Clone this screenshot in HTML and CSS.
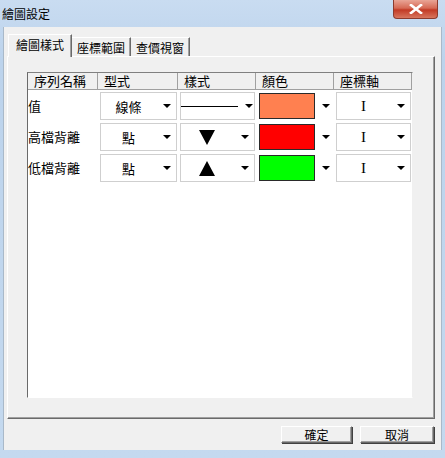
FILE: index.html
```html
<!DOCTYPE html>
<html lang="zh-Hant">
<head>
    <meta charset="UTF-8">
    <title>繪圖設定</title>
    <link rel="stylesheet" href="styles.css">
</head>
<body>
    <div class="window">
        <div class="titlebar">
            <span class="title">繪圖設定</span>
            <div class="close">
                <svg width="14" height="10" viewBox="0 0 14 10">
                    <path d="M2 1 L12 9 M12 1 L2 9" stroke="#fff" stroke-width="2.6" stroke-linecap="square"/>
                </svg>
            </div>
        </div>
        <div class="client">
            <div class="tabs">
                <div class="tab active">繪圖樣式</div>
                <div class="tab">座標範圍</div>
                <div class="tab">查價視窗</div>
            </div>
            <div class="panel">
                <div class="grid">
                    <div class="head">
                        <div class="hcell">序列名稱</div>
                        <div class="hcell">型式</div>
                        <div class="hcell">樣式</div>
                        <div class="hcell">顏色</div>
                        <div class="hcell">座標軸</div>
                    </div>

                    <div class="row">
                        <div class="name">值</div>
                        <div class="col"><div class="combo"><span class="val">線條</span><span class="arrow"></span></div></div>
                        <div class="col"><div class="combo style"><span class="val"><span class="line"></span></span><span class="arrow"></span></div></div>
                        <div class="col"><div class="color"><span class="swatch coral"></span><span class="arrow"></span></div></div>
                        <div class="col"><div class="combo"><span class="val axis">I</span><span class="arrow"></span></div></div>
                    </div>

                    <div class="row">
                        <div class="name">高檔背離</div>
                        <div class="col"><div class="combo"><span class="val">點</span><span class="arrow"></span></div></div>
                        <div class="col"><div class="combo style"><span class="val"><span class="tri down"></span></span><span class="arrow"></span></div></div>
                        <div class="col"><div class="color"><span class="swatch red"></span><span class="arrow"></span></div></div>
                        <div class="col"><div class="combo"><span class="val axis">I</span><span class="arrow"></span></div></div>
                    </div>

                    <div class="row">
                        <div class="name">低檔背離</div>
                        <div class="col"><div class="combo"><span class="val">點</span><span class="arrow"></span></div></div>
                        <div class="col"><div class="combo style"><span class="val"><span class="tri up"></span></span><span class="arrow"></span></div></div>
                        <div class="col"><div class="color"><span class="swatch green"></span><span class="arrow"></span></div></div>
                        <div class="col"><div class="combo"><span class="val axis">I</span><span class="arrow"></span></div></div>
                    </div>
                </div>
            </div>
            <div class="buttons">
                <button class="btn ok">確定</button>
                <button class="btn cancel">取消</button>
            </div>
        </div>
    </div>
</body>
</html>
```

FILE: styles.css
```css
body {
    margin: 0;
    background: #c6daef;
    font-family: "Noto Sans CJK TC", "Noto Sans", sans-serif;
    color: #000;
}
.window {
    width: 445px;
    height: 458px;
    display: flex;
    flex-direction: column;
    background: linear-gradient(#c9dcf1, #bcd3ec 60px, #c4d9ef);
}
.titlebar {
    height: 27px;
    display: flex;
    align-items: flex-start;
    flex-shrink: 0;
}
.title {
    font-size: 12px;
    line-height: 14px;
    margin: 7px 0 0 2px;
}
.close {
    margin-left: auto;
    margin-right: 7px;
    width: 45px;
    height: 19px;
    box-sizing: border-box;
    border: 1px solid #8c3b2e;
    border-top: none;
    border-radius: 0 0 4px 4px;
    background: linear-gradient(#e9a596, #d66a55 45%, #c23a25 55%, #d8765e);
    display: flex;
    align-items: center;
    justify-content: center;
}
.client {
    margin: 0 3px;
    height: 423px;
    box-sizing: border-box;
    background: #f0f0f0;
    padding-top: 7px;
    border-left: 1px solid #a9b9c9;
    border-right: 1px solid #a9b9c9;
}
.tabs {
    display: flex;
    align-items: flex-end;
    height: 22px;
    margin-left: 4px;
    font-size: 12px;
}
.tab {
    height: 19px;
    line-height: 19px;
    padding: 0 5px;
    box-sizing: border-box;
    border-top: 1px solid #fff;
    border-right: 1px solid #6a6a6a;
    box-shadow: inset -1px 0 #a0a0a0;
}
.tab.active {
    height: 23px;
    line-height: 20px;
    padding: 0 7px;
    border-left: 1px solid #fff;
    margin-bottom: -1px;
    background: #f0f0f0;
    position: relative;
    z-index: 1;
}
.panel {
    margin-left: 3px;
    width: 428px;
    height: 363px;
    box-sizing: border-box;
    border: 1px solid;
    border-color: #fff #6a6a6a #6a6a6a #fff;
    box-shadow: inset -1px -1px #a0a0a0;
    padding: 15px 0 0 19px;
}
.grid {
    width: 386px;
    height: 326px;
    box-sizing: border-box;
    background: #fff;
    border: 1px solid;
    border-color: #808080 #f0f0f0 #fff #6a6a6a;
    font-size: 13px;
}
.head {
    display: grid;
    grid-template-columns: 70px 80px 78px 78px 78px;
    height: 17px;
}
.hcell {
    background: #f0f0f0;
    border-right: 1px solid #a0a0a0;
    border-bottom: 1px solid #a0a0a0;
    line-height: 16px;
    padding-left: 6px;
}
.row {
    display: grid;
    grid-template-columns: 70px 80px 78px 78px 78px;
    height: 31px;
    padding-top: 2px;
    box-sizing: border-box;
}
.name {
    line-height: 28px;
    white-space: nowrap;
}
.col {
    padding: 0 1px 0 2px;
}
.combo {
    height: 28px;
    box-sizing: border-box;
    border: 1px solid #cfcfcf;
    display: flex;
    align-items: center;
}
.val {
    flex: 1;
    text-align: center;
    display: flex;
    justify-content: center;
    align-items: center;
}
.val.axis {
    font-family: "Liberation Serif", serif;
    font-size: 15px;
}
.arrow {
    width: 0;
    height: 0;
    border-left: 4px solid transparent;
    border-right: 4px solid transparent;
    border-top: 4px solid #000;
    margin: 0 5px 0 7px;
}
.style .val {
    justify-content: flex-start;
    padding-left: 18px;
}
.style .line {
    display: block;
    width: 57px;
    height: 1px;
    background: #000;
    margin-left: -18px;
}
.tri {
    width: 0;
    height: 0;
    border-left: 8px solid transparent;
    border-right: 8px solid transparent;
}
.tri.down {
    border-top: 15px solid #000;
}
.tri.up {
    border-bottom: 15px solid #000;
}
.color {
    height: 28px;
    display: flex;
    align-items: center;
}
.swatch {
    width: 56px;
    height: 26px;
    box-sizing: border-box;
    border: 1px solid #2a2a2a;
    margin-left: 1px;
}
.coral { background: #ff8050; }
.red { background: #ff0000; }
.green { background: #00ff00; }
.color .arrow {
    margin: 0 0 0 7px;
}
.buttons {
    display: flex;
    justify-content: flex-end;
    gap: 8px;
    padding: 7px 7px 0 0;
}
.btn {
    height: 17px;
    padding: 0;
    font-family: inherit;
    font-size: 12px;
    line-height: 13px;
    background: #f0f0f0;
    border: 1px solid;
    border-color: #fff #6a6a6a #6a6a6a #fff;
    box-shadow: 1px 1px #404040, inset -1px -1px #a0a0a0;
}
.ok { width: 71px; }
.cancel { width: 74px; }
```
